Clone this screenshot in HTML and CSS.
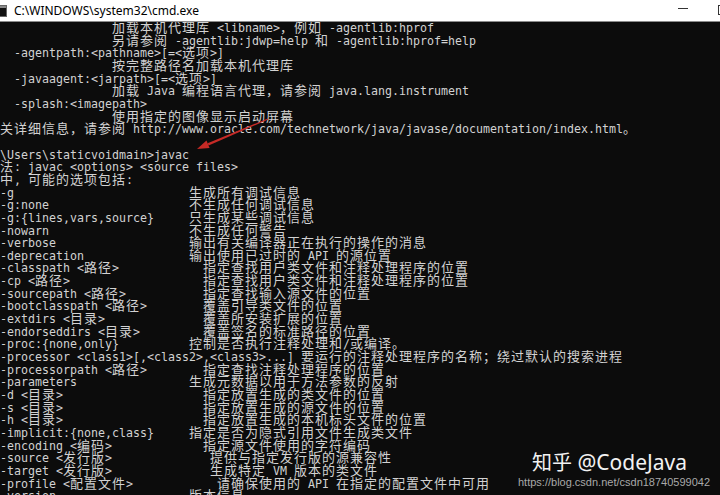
FILE: index.html
```html
<!DOCTYPE html>
<html lang="zh-CN">
<head>
    <meta charset="UTF-8">
    <meta name="viewport" content="width=device-width, initial-scale=1.0">
    <title>cmd.exe</title>
    <link rel="stylesheet" href="styles.css">
</head>
<body>
    <div class="window">
        <header class="titlebar">
            <svg class="app-icon" width="12" height="12" viewBox="0 0 12 12">
                <rect x="0.5" y="0.5" width="11" height="11" fill="#111" stroke="#666"/>
                <rect x="1" y="1" width="10" height="2" fill="#8a8a8a"/>
            </svg>
            <span class="title">C:\WINDOWS\system32\cmd.exe</span>
            <span class="btn-min"></span>
            <span class="btn-max"></span>
        </header>

        <main class="console">
            <div class="screen">
                <div class="ln ind"><span class="c">加载本机代理库</span> &lt;libname&gt;<span class="c">，例如</span> -agentlib:hprof</div>
                <div class="ln ind"><span class="c">另请参阅</span> -agentlib:jdwp=help <span class="c">和</span> -agentlib:hprof=help</div>
                <div class="ln sub">-agentpath:&lt;pathname&gt;[=&lt;<span class="c">选项</span>&gt;]</div>
                <div class="ln ind"><span class="c">按完整路径名加载本机代理库</span></div>
                <div class="ln sub">-javaagent:&lt;jarpath&gt;[=&lt;<span class="c">选项</span>&gt;]</div>
                <div class="ln ind"><span class="c">加载</span> Java <span class="c">编程语言代理，请参阅</span> java.lang.instrument</div>
                <div class="ln sub">-splash:&lt;imagepath&gt;</div>
                <div class="ln ind"><span class="c">使用指定的图像显示启动屏幕</span></div>
                <div class="ln"><span class="c">有关详细信息，请参阅</span> http://www.oracle.com/technetwork/java/javase/documentation/index.html<span class="c">。</span></div>
                <div class="ln"></div>
                <div class="ln">C:\Users\staticvoidmain&gt;javac</div>
                <div class="ln"><span class="c">用法</span>: javac &lt;options&gt; &lt;source files&gt;</div>
                <div class="ln"><span class="c">其中</span>, <span class="c">可能的选项包括</span>:</div>

                <div class="ln opt-row"><span class="opt">-g</span><span class="c">生成所有调试信息</span></div>
                <div class="ln opt-row"><span class="opt">-g:none</span><span class="c">不生成任何调试信息</span></div>
                <div class="ln opt-row"><span class="opt">-g:{lines,vars,source}</span><span class="c">只生成某些调试信息</span></div>
                <div class="ln opt-row"><span class="opt">-nowarn</span><span class="c">不生成任何警告</span></div>
                <div class="ln opt-row"><span class="opt">-verbose</span><span class="c">输出有关编译器正在执行的操作的消息</span></div>
                <div class="ln opt-row"><span class="opt">-deprecation</span><span class="c">输出使用已过时的</span> API <span class="c">的源位置</span></div>
                <div class="ln opt-row"><span class="opt k2">-classpath &lt;<span class="c">路径</span>&gt;</span><span class="c">指定查找用户类文件和注释处理程序的位置</span></div>
                <div class="ln opt-row"><span class="opt k2">-cp &lt;<span class="c">路径</span>&gt;</span><span class="c">指定查找用户类文件和注释处理程序的位置</span></div>
                <div class="ln opt-row"><span class="opt k2">-sourcepath &lt;<span class="c">路径</span>&gt;</span><span class="c">指定查找输入源文件的位置</span></div>
                <div class="ln opt-row"><span class="opt k2">-bootclasspath &lt;<span class="c">路径</span>&gt;</span><span class="c">覆盖引导类文件的位置</span></div>
                <div class="ln opt-row"><span class="opt k2">-extdirs &lt;<span class="c">目录</span>&gt;</span><span class="c">覆盖所安装扩展的位置</span></div>
                <div class="ln opt-row"><span class="opt k2">-endorseddirs &lt;<span class="c">目录</span>&gt;</span><span class="c">覆盖签名的标准路径的位置</span></div>
                <div class="ln opt-row"><span class="opt">-proc:{none,only}</span><span class="c">控制是否执行注释处理和</span>/<span class="c">或编译。</span></div>
                <div class="ln opt-row">-processor &lt;class1&gt;[,&lt;class2&gt;,&lt;class3&gt;...] <span class="c">要运行的注释处理程序的名称；绕过默认的搜索进程</span></div>
                <div class="ln opt-row"><span class="opt k2">-processorpath &lt;<span class="c">路径</span>&gt;</span><span class="c">指定查找注释处理程序的位置</span></div>
                <div class="ln opt-row"><span class="opt">-parameters</span><span class="c">生成元数据以用于方法参数的反射</span></div>
                <div class="ln opt-row"><span class="opt k2">-d &lt;<span class="c">目录</span>&gt;</span><span class="c">指定放置生成的类文件的位置</span></div>
                <div class="ln opt-row"><span class="opt k2">-s &lt;<span class="c">目录</span>&gt;</span><span class="c">指定放置生成的源文件的位置</span></div>
                <div class="ln opt-row"><span class="opt k2">-h &lt;<span class="c">目录</span>&gt;</span><span class="c">指定放置生成的本机标头文件的位置</span></div>
                <div class="ln opt-row"><span class="opt">-implicit:{none,class}</span><span class="c">指定是否为隐式引用文件生成类文件</span></div>
                <div class="ln opt-row"><span class="opt k2">-encoding &lt;<span class="c">编码</span>&gt;</span><span class="c">指定源文件使用的字符编码</span></div>
                <div class="ln opt-row"><span class="opt k3">-source &lt;<span class="c">发行版</span>&gt;</span><span class="c">提供与指定发行版的源兼容性</span></div>
                <div class="ln opt-row"><span class="opt k3">-target &lt;<span class="c">发行版</span>&gt;</span><span class="c">生成特定</span> VM <span class="c">版本的类文件</span></div>
                <div class="ln opt-row"><span class="opt k4">-profile &lt;<span class="c">配置文件</span>&gt;</span><span class="c">请确保使用的</span> API <span class="c">在指定的配置文件中可用</span></div>
                <div class="ln opt-row"><span class="opt">-version</span><span class="c">版本信息</span></div>
            </div>

            <!-- annotation arrow pointing at the javac command -->
            <svg class="arrow" width="720" height="473" viewBox="0 0 720 473">
                <polygon points="268.2,97.5 208.6,123.4 207.6,121.2 267.8,96.5" fill="#c62a26"/>
                <polygon points="197,127 209.6,126 206.5,118.6" fill="#c62a26"/>
            </svg>

            <div class="watermark">
                <div class="brand"><span class="brand-cn">知乎</span> @CodeJava</div>
                <div class="source">https://blog.csdn.net/csdn18740599042</div>
            </div>
        </main>
    </div>
</body>
</html>
```

FILE: styles.css
```css
body {
    margin: 0;
    padding: 0;
    background-color: #0c0c0c;
    overflow: hidden;
}

.window {
    width: 720px;
    height: 495px;
    display: flex;
    flex-direction: column;
    overflow: hidden;
}

.titlebar {
    height: 21px;
    flex-shrink: 0;
    display: flex;
    align-items: center;
    background-color: #fff;
    border-bottom: 1px solid #8c8c8c;
}

.app-icon {
    margin-left: -5px;
    margin-right: 7px;
}

.title {
    font-family: "Noto Sans", sans-serif;
    font-size: 12px;
    color: #000;
}

.btn-min {
    margin-left: auto;
    margin-right: 30px;
    width: 10px;
    height: 1px;
    background-color: #333;
    margin-top: -4px;
}

.btn-max {
    width: 9px;
    height: 8px;
    margin-right: -9px;
    margin-top: -1px;
    border: 1px solid #333;
}

.console {
    flex: 1;
    position: relative;
    overflow: hidden;
    background-color: #0c0c0c;
}

.screen {
    margin-left: -14px;
    font-family: "DejaVu Sans Mono", monospace;
    font-size: 11.63px;
    color: #d2d2d2;
}

.ln {
    height: 12.67px;
    line-height: 12.67px;
    white-space: pre;
}

.ind {
    padding-left: 18ch;
}

.sub {
    padding-left: 4ch;
}

.opt-row {
    padding-left: 2ch;
}

.opt {
    display: inline-block;
    width: 27ch;
    line-height: 12.67px;
}

.opt.k2 {
    width: 29ch;
}

.opt.k3 {
    width: 30ch;
}

.opt.k4 {
    width: 31ch;
}

/* CJK glyphs take two cells, like the console does */
.c {
    font-family: "Noto Sans CJK SC", sans-serif;
    font-size: 13px;
    letter-spacing: 1px;
    line-height: 1px;
}

.arrow {
    position: absolute;
    left: 0;
    top: 0;
}

.watermark {
    position: absolute;
    left: 516px;
    top: 427px;
}

.brand {
    margin-left: 16px;
    font-family: "Noto Sans", sans-serif;
    font-size: 21px;
    line-height: 26px;
    color: #f2f2f2;
}

.brand-cn {
    font-family: "Noto Sans CJK SC", sans-serif;
    font-size: 20px;
}

.source {
    margin-left: 2px;
    font-family: "Liberation Sans", Arial, sans-serif;
    font-size: 11px;
    line-height: 14px;
    color: #a9a9a9;
}
```
